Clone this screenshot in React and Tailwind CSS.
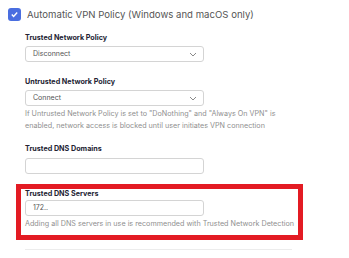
import React from 'react';

const Chevron = () => (
    <svg width="8" height="5" viewBox="0 0 8 5" className="shrink-0">
        <path d="M1 1l3 3 3-3" fill="none" stroke="#8a8a8a" strokeWidth="1" />
    </svg>
);

const Select = ({ value }) => (
    <div className="w-[179px] h-[16px] rounded-[3px] border border-[#d4d4d4] bg-white flex items-center justify-between pl-[7px] pr-[6px]">
        <span className="text-[7px] text-[#555]">{value}</span>
        <Chevron />
    </div>
);

const Label = ({ children }) => (
    <div className="text-[7.2px] font-bold text-[#232333] leading-[10px]">{children}</div>
);

export default function App() {
    return (
        <div className="w-[349px] h-[258px] bg-white overflow-hidden font-['Inter',sans-serif]">
            {/* checkbox row */}
            <div className="flex items-center pt-[8px] pl-[8px] gap-[6px]">
                <div className="w-[13px] h-[13px] rounded-[3px] bg-[#4a6ee0] flex items-center justify-center">
                    <svg width="9" height="9" viewBox="0 0 9 9">
                        <path d="M1.8 4.6l1.8 1.8 3.6-3.8" fill="none" stroke="white" strokeWidth="1.4" />
                    </svg>
                </div>
                <span className="text-[9.6px] text-[#555] leading-[13px]">Automatic VPN Policy (Windows and macOS only)</span>
            </div>

            <div className="pl-[25px]">
                <div className="mt-[12px]">
                    <Label>Trusted Network Policy</Label>
                    <div className="mt-[3px]"><Select value="Disconnect" /></div>
                </div>

                <div className="mt-[15px]">
                    <Label>Untrusted Network Policy</Label>
                    <div className="mt-[3px]"><Select value="Connect" /></div>
                    <p className="mt-[2px] text-[7.2px] text-[#8f8f8f] leading-[12px]">
                        If Untrusted Network Policy is set to "DoNothing" and "Always On VPN" is<br />
                        enabled, network access is blocked until user initiates VPN connection
                    </p>
                </div>

                <div className="mt-[12px]">
                    <Label>Trusted DNS Domains</Label>
                    <div className="mt-[4px] w-[179px] h-[16px] rounded-[3px] border border-[#d4d4d4] bg-white" />
                </div>

                <div className="mt-[10px] -ml-[9px] w-[287px] border-[5px] border-[#e31b23] pl-[4px] pt-[0px] pb-[5px]">
                    <Label>Trusted DNS Servers</Label>
                    <div className="mt-[1px] w-[179px] h-[16px] rounded-[3px] border border-[#d4d4d4] bg-white flex items-center pl-[7px]">
                        <span className="text-[7px] text-[#555]">172..</span>
                    </div>
                    <p className="mt-[2px] text-[7.2px] text-[#8f8f8f] leading-[12px]">
                        Adding all DNS servers in use is recommended with Trusted Network Detection
                    </p>
                </div>

                <div className="mt-[9px] w-[267px] h-px bg-[#ececec]" />
            </div>
        </div>
    );
}
